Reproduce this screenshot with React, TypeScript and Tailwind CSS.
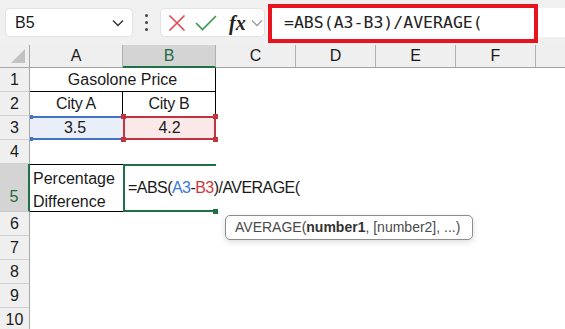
import React from "react";

const cols = ["A", "B", "C", "D", "E", "F"];

export default function App() {
  const rows = [1, 2, 3, 4, 5, 6, 7, 8, 9, 10];
  return (
    <div className="relative w-[565px] h-[329px] overflow-hidden bg-white font-['Liberation_Sans',Arial,sans-serif] text-[#1a1a1a]">
      {/* Toolbar */}
      <div className="flex h-[45px] items-center bg-[#f0f0f0] pl-[5px]">
        <div className="flex h-[29px] w-[128px] items-center justify-between rounded-[5px] border border-[#e3e3e3] bg-white pl-[9px] pr-[8px]">
          <span className="text-[16px]">B5</span>
          <svg width="12" height="8" viewBox="0 0 12 8" fill="none">
            <path d="M1 1.5 L6 6.5 L11 1.5" stroke="#333" strokeWidth="1.4" />
          </svg>
        </div>
        <div className="flex w-[27px] flex-col items-center justify-center gap-[4px]">
          <span className="h-[3px] w-[3px] rounded-full bg-[#444]" />
          <span className="h-[3px] w-[3px] rounded-full bg-[#444]" />
          <span className="h-[3px] w-[3px] rounded-full bg-[#444]" />
        </div>
        <div className="flex h-[29px] w-[105px] items-center rounded-[5px] border border-[#e3e3e3] bg-white pl-[6px]">
          <svg width="18" height="18" viewBox="0 0 18 18" fill="none" className="ml-[1px]">
            <path d="M1.5 1.5 L16.5 16.5 M16.5 1.5 L1.5 16.5" stroke="#e2474b" strokeWidth="1.6" />
          </svg>
          <svg width="22" height="16" viewBox="0 0 22 16" fill="none" className="ml-[9px]">
            <path d="M1 8 L7.5 14.5 L21 1" stroke="#3c9a4e" strokeWidth="1.7" />
          </svg>
          <span className="ml-[12px] font-['Liberation_Serif',serif] text-[20px] font-bold italic leading-none text-[#222]">fx</span>
          <svg width="12" height="8" viewBox="0 0 12 8" fill="none" className="ml-[5px]">
            <path d="M1 1.5 L6 6.5 L11 1.5" stroke="#9a9a9a" strokeWidth="1.3" />
          </svg>
        </div>
        <div className="relative ml-[2px] h-[29px] flex-1 rounded-l-[5px] bg-white">
          <div className="absolute left-[1px] top-[-4px] flex h-[39px] w-[270px] items-center border-[4px] border-[#e8131f] bg-white pl-[12px]">
            <span className="font-['DejaVu_Sans_Mono',monospace] text-[16.5px] text-[#222]">=ABS(A3-B3)/AVERAGE(</span>
          </div>
        </div>
      </div>

      {/* Sheet */}
      <div className="grid grid-cols-[30px_93px_93px_80px_80px_80px_80px_1fr] grid-rows-[23px_24px_24px_24px_24px_48px_24px_24px_24px_24px_24px] text-[16px]">
        {/* corner */}
        <div className="relative border-b border-r border-[#a8a8a8] bg-[#efefef]">
          <svg width="16" height="16" viewBox="0 0 16 16" className="absolute bottom-[3px] right-[3px]">
            <path d="M15 1 L15 15 L1 15 Z" fill="#c2c2c2" />
          </svg>
        </div>
        {cols.map((c) => (
          <div
            key={c}
            className={
              c === "B"
                ? "flex items-center justify-center border-b-2 border-r border-b-[#1e7145] border-r-[#b0b0b0] bg-[#d4d4d4] text-[16px] text-[#1e6b41]"
                : "flex items-center justify-center border-b border-r border-b-[#a0a0a0] border-r-[#b0b0b0] bg-[#efefef] text-[16px]"
            }
          >
            {c}
          </div>
        ))}
        <div className="border-b border-b-[#a0a0a0] bg-[#efefef]" />

        {rows.map((r) => (
          <div
            key={r}
            className={
              r === 5
                ? "col-start-1 flex items-end justify-center border-b border-r-2 border-b-[#c8c8c8] border-r-[#1e7145] bg-[#d4d4d4] pb-[2px] text-[16px] text-[#1e6b41]"
                : "col-start-1 flex items-center justify-center border-b border-r border-b-[#cfcfcf] border-r-[#a8a8a8] bg-[#efefef] text-[16px]"
            }
            style={{ gridRow: r + 1 }}
          >
            {r}
          </div>
        ))}

        {/* Row 1 */}
        <div className="col-span-2 col-start-2 row-start-2 flex items-center justify-center border-b border-r border-black">
          Gasolone Price
        </div>
        {/* Row 2 */}
        <div className="col-start-2 row-start-3 flex items-center justify-center border-r border-black tracking-[-0.3px]">City A</div>
        <div className="col-start-3 row-start-3 flex items-center justify-center border-r border-black tracking-[-0.3px]">City B</div>
        {/* Row 3 */}
        <div className="relative col-start-2 row-start-4 flex items-center justify-center border-y-2 border-[#4472c4] bg-[#e9eef8] pr-[3px]">
          3.5
          <span className="absolute left-0 top-[-3px] h-[4px] w-[3px] bg-[#4472c4]" />
          <span className="absolute bottom-[-3px] left-0 h-[4px] w-[3px] bg-[#4472c4]" />
        </div>
        <div className="relative col-start-3 row-start-4 flex items-center justify-center border-2 border-[#c0343f] bg-[#fbe9e9]">
          4.2
          <span className="absolute left-[-4px] top-[-4px] h-[5px] w-[5px] bg-[#c0343f]" />
          <span className="absolute right-[-4px] top-[-4px] h-[5px] w-[5px] bg-[#c0343f]" />
          <span className="absolute bottom-[-4px] left-[-4px] h-[5px] w-[5px] bg-[#c0343f]" />
          <span className="absolute bottom-[-4px] right-[-4px] h-[5px] w-[5px] bg-[#c0343f]" />
        </div>
        {/* Row 5 */}
        <div className="col-start-2 row-start-6 flex flex-col justify-center border-y border-black pl-[3px] pt-[3px] leading-[23px]">
          <span>Percentage</span>
          <span>Difference</span>
        </div>
        <div className="relative z-10 col-start-3 row-start-6 flex items-center whitespace-nowrap border-y-2 border-l-2 border-[#1e7145] pl-[3px] tracking-[-0.55px]">
          <span>=ABS(</span>
          <span className="text-[#3b78d8]">A3</span>
          <span>-</span>
          <span className="text-[#d0383e]">B3</span>
          <span>)/AVERAGE(</span>
          <span className="ml-[1px] h-[18px] w-[1px] bg-black" />
          <span className="absolute bottom-[-4px] right-[-2px] h-[5px] w-[5px] bg-[#1e7145]" />
        </div>
      </div>

      {/* Tooltip */}
      <div className="absolute left-[225px] top-[215px] flex h-[25px] w-[248px] items-center rounded-[5px] border border-[#8c8c8c] bg-white pl-[9px] text-[14px] text-[#4a4a4a] shadow-[0_2px_6px_rgba(0,0,0,0.15)]">
        <span>AVERAGE(</span>
        <span className="font-bold text-[#333]">number1</span>
        <span>, [number2], ...)</span>
      </div>
    </div>
  );
}
